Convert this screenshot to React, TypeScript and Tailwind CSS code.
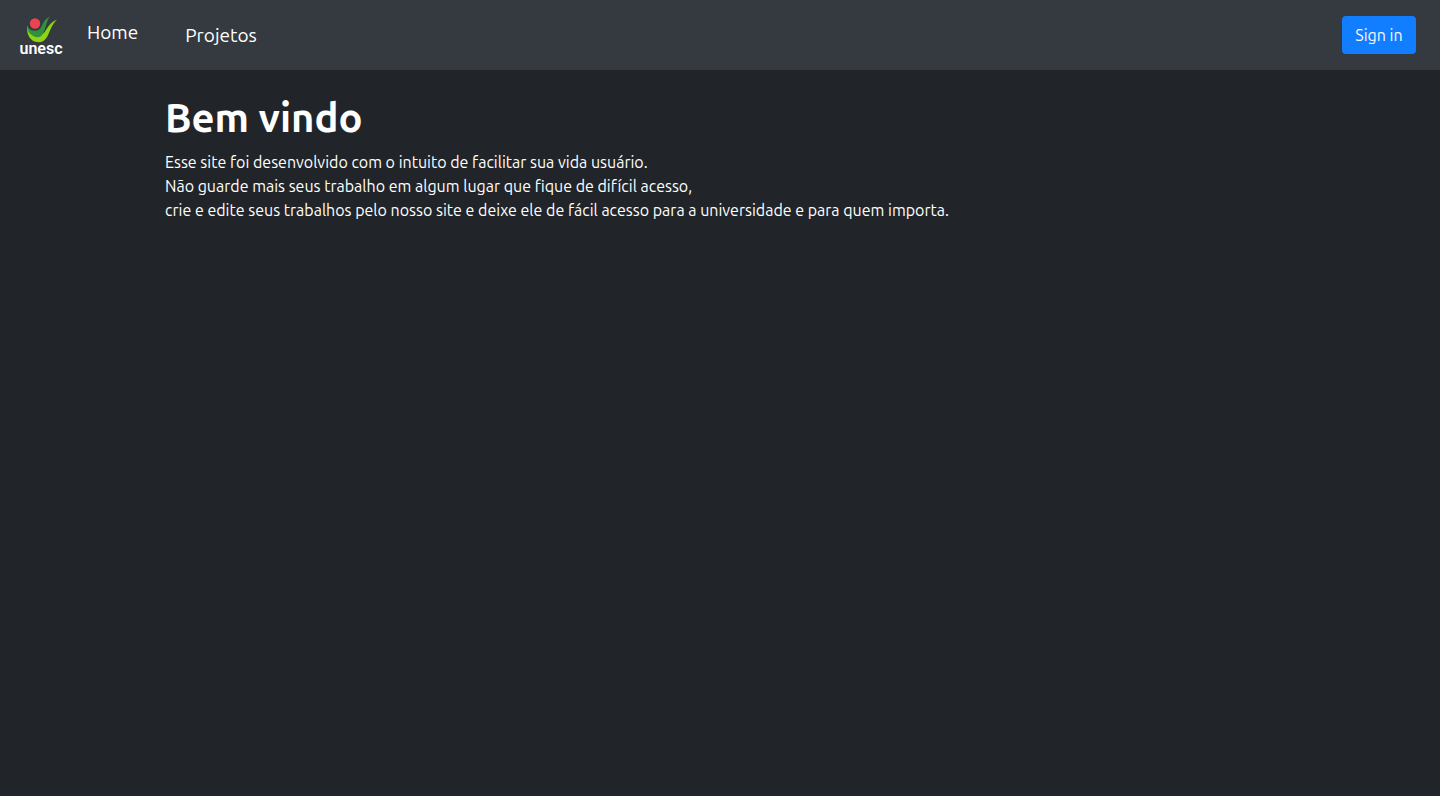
function UnescLogo() {
  return (
    <svg viewBox="0 0 48 48" className="size-12" role="img" aria-label="unesc">
      <path d="M11.200 17C10.500 23 12.500 33 23 33.200C33.500 33 32 19 41 10.500C34 13.500 32 18 29 22.500C24.500 29 15 28 11.200 17Z" fill="#8fd314" />
      <path d="M11.200 16C10.500 22 15 28 22 28.300C29.500 27.500 29 14 33.800 7.500C29 10 28 12.500 26 16.500C23.500 21.500 21 22 18 21.700C14.500 21.300 12 19.500 11.200 16Z" fill="#2f913e" />
      <circle cx="19" cy="14.500" r="6.200" fill="#343a40" />
      <circle cx="19" cy="14.500" r="5.200" fill="#ed4250" />
      <text x="25" y="45" textAnchor="middle" className="fill-white font-['Roboto',sans-serif] text-[16px] font-semibold">
        unesc
      </text>
    </svg>
  );
}

export default function App() {
  return (
    <div className="min-h-screen bg-[#212529] font-['Ubuntu','Noto_Sans',sans-serif] text-base text-white">
      <nav className="flex items-center bg-[#343a40] px-4 py-2">
        <a href="#" className="flex h-[54px] items-center pb-1">
          <UnescLogo />
        </a>
        <a href="#" className="ml-[23px] pb-[6px] text-[19px] leading-7">Home</a>
        <a href="#projetos" className="ml-[47px] text-[19px] leading-7">Projetos</a>
        <button type="button" className="mr-2 ml-auto h-[38px] min-w-[74px] rounded bg-[#117dff] px-3 text-[#f8f9fa]">
          Sign in
        </button>
      </nav>
      <main className="mx-auto max-w-[1140px] px-[15px] pt-6">
        <h1 className="mb-2 text-[40px] leading-12 font-semibold">Bem vindo</h1>
        <p>
          Esse site foi desenvolvido com o intuito de facilitar sua vida usuário.
          <br />
          Não guarde mais seus trabalho em algum lugar que fique de difícil acesso,
          <br />
          crie e edite seus trabalhos pelo nosso site e deixe ele de fácil acesso para a universidade e para quem importa.
        </p>
      </main>
    </div>
  );
}
